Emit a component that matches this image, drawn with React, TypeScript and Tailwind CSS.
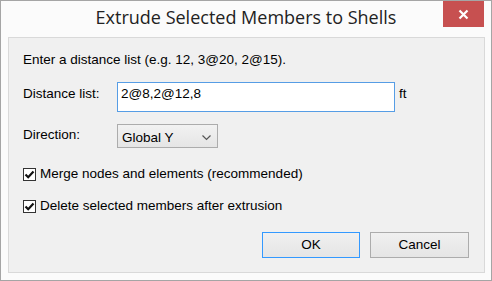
const body = { fontFamily: '"Liberation Sans", Arial, sans-serif' };

const Check = () => (
  <div className="w-[13px] h-[13px] border border-[#333333] bg-white flex items-center justify-center shrink-0">
    <svg width="11" height="11" viewBox="0 0 11 11">
      <path d="M1.5 5.5 L4.2 8.2 L9.5 2.5" fill="none" stroke="#111" strokeWidth="2.2" />
    </svg>
  </div>
);

export default function App() {
  return (
    <div className="w-[492px] h-[281px] border border-[#a5a5a5] bg-[#fbfbfb] flex flex-col">
      {/* Title bar */}
      <div className="relative h-[36px] shrink-0 flex items-start justify-center">
        <span
          className="mt-[4px] text-[18px] leading-[25px] text-[#222]"
          style={{ fontFamily: '"Open Sans", "Noto Sans", sans-serif' }}
        >
          Extrude Selected Members to Shells
        </span>
        <div className="absolute right-[7px] top-0 w-[41px] h-[26px] bg-[#c75050] flex items-center justify-center">
          <svg width="11" height="11" viewBox="0 0 11 11">
            <path d="M1.5 1.5 L9.5 9.5 M9.5 1.5 L1.5 9.5" stroke="#fff" strokeWidth="2.2" />
          </svg>
        </div>
      </div>

      {/* Content panel */}
      <div
        className="ml-[7px] mr-[6px] h-[236px] border border-[#d9d9d9] bg-[#f0f0f0] pl-[14px] pr-[15px] pt-[14px] text-[13.5px] leading-[16px] text-black flex flex-col"
        style={body}
      >
        <div>Enter a distance list (e.g. 12, 3@20, 2@15).</div>

        <div className="mt-[14px] flex items-start">
          <div className="w-[94px] pt-[4px]">Distance list:</div>
          <div className="w-[278px] h-[30px] border border-[#569de5] bg-white pl-[3px] pt-[3px]">2@8,2@12,8</div>
          <div className="ml-[4px] pt-[4px]">ft</div>
        </div>

        <div className="mt-[12px] flex items-start">
          <div className="w-[94px] pt-[3px]">Direction:</div>
          <div className="w-[101px] h-[24px] border border-[#acacac] bg-gradient-to-b from-[#f2f2f2] to-[#e5e5e5] pl-[4px] pt-[6px] flex items-start justify-between pr-[6px]">
            <span className="-mt-[1px]">Global Y</span>
            <svg width="9" height="6" viewBox="0 0 9 6" className="mt-[4px]">
              <path d="M0.5 0.5 L4.5 4.5 L8.5 0.5" fill="none" stroke="#555" strokeWidth="1.2" />
            </svg>
          </div>
        </div>

        <div className="mt-[18px] flex items-center gap-[4px]">
          <Check />
          <span>Merge nodes and elements (recommended)</span>
        </div>

        <div className="mt-[16px] flex items-center gap-[4px]">
          <Check />
          <span>Delete selected members after extrusion</span>
        </div>

        <div className="mt-[18px] flex justify-end gap-[10px]">
          <button className="w-[98px] h-[26px] border border-[#3399ff] bg-gradient-to-b from-[#f0f0f0] to-[#e5e5e5] text-[13.5px]">
            OK
          </button>
          <button className="w-[99px] h-[26px] border border-[#acacac] bg-gradient-to-b from-[#f0f0f0] to-[#e5e5e5] text-[13.5px]">
            Cancel
          </button>
        </div>
      </div>
    </div>
  );
}
